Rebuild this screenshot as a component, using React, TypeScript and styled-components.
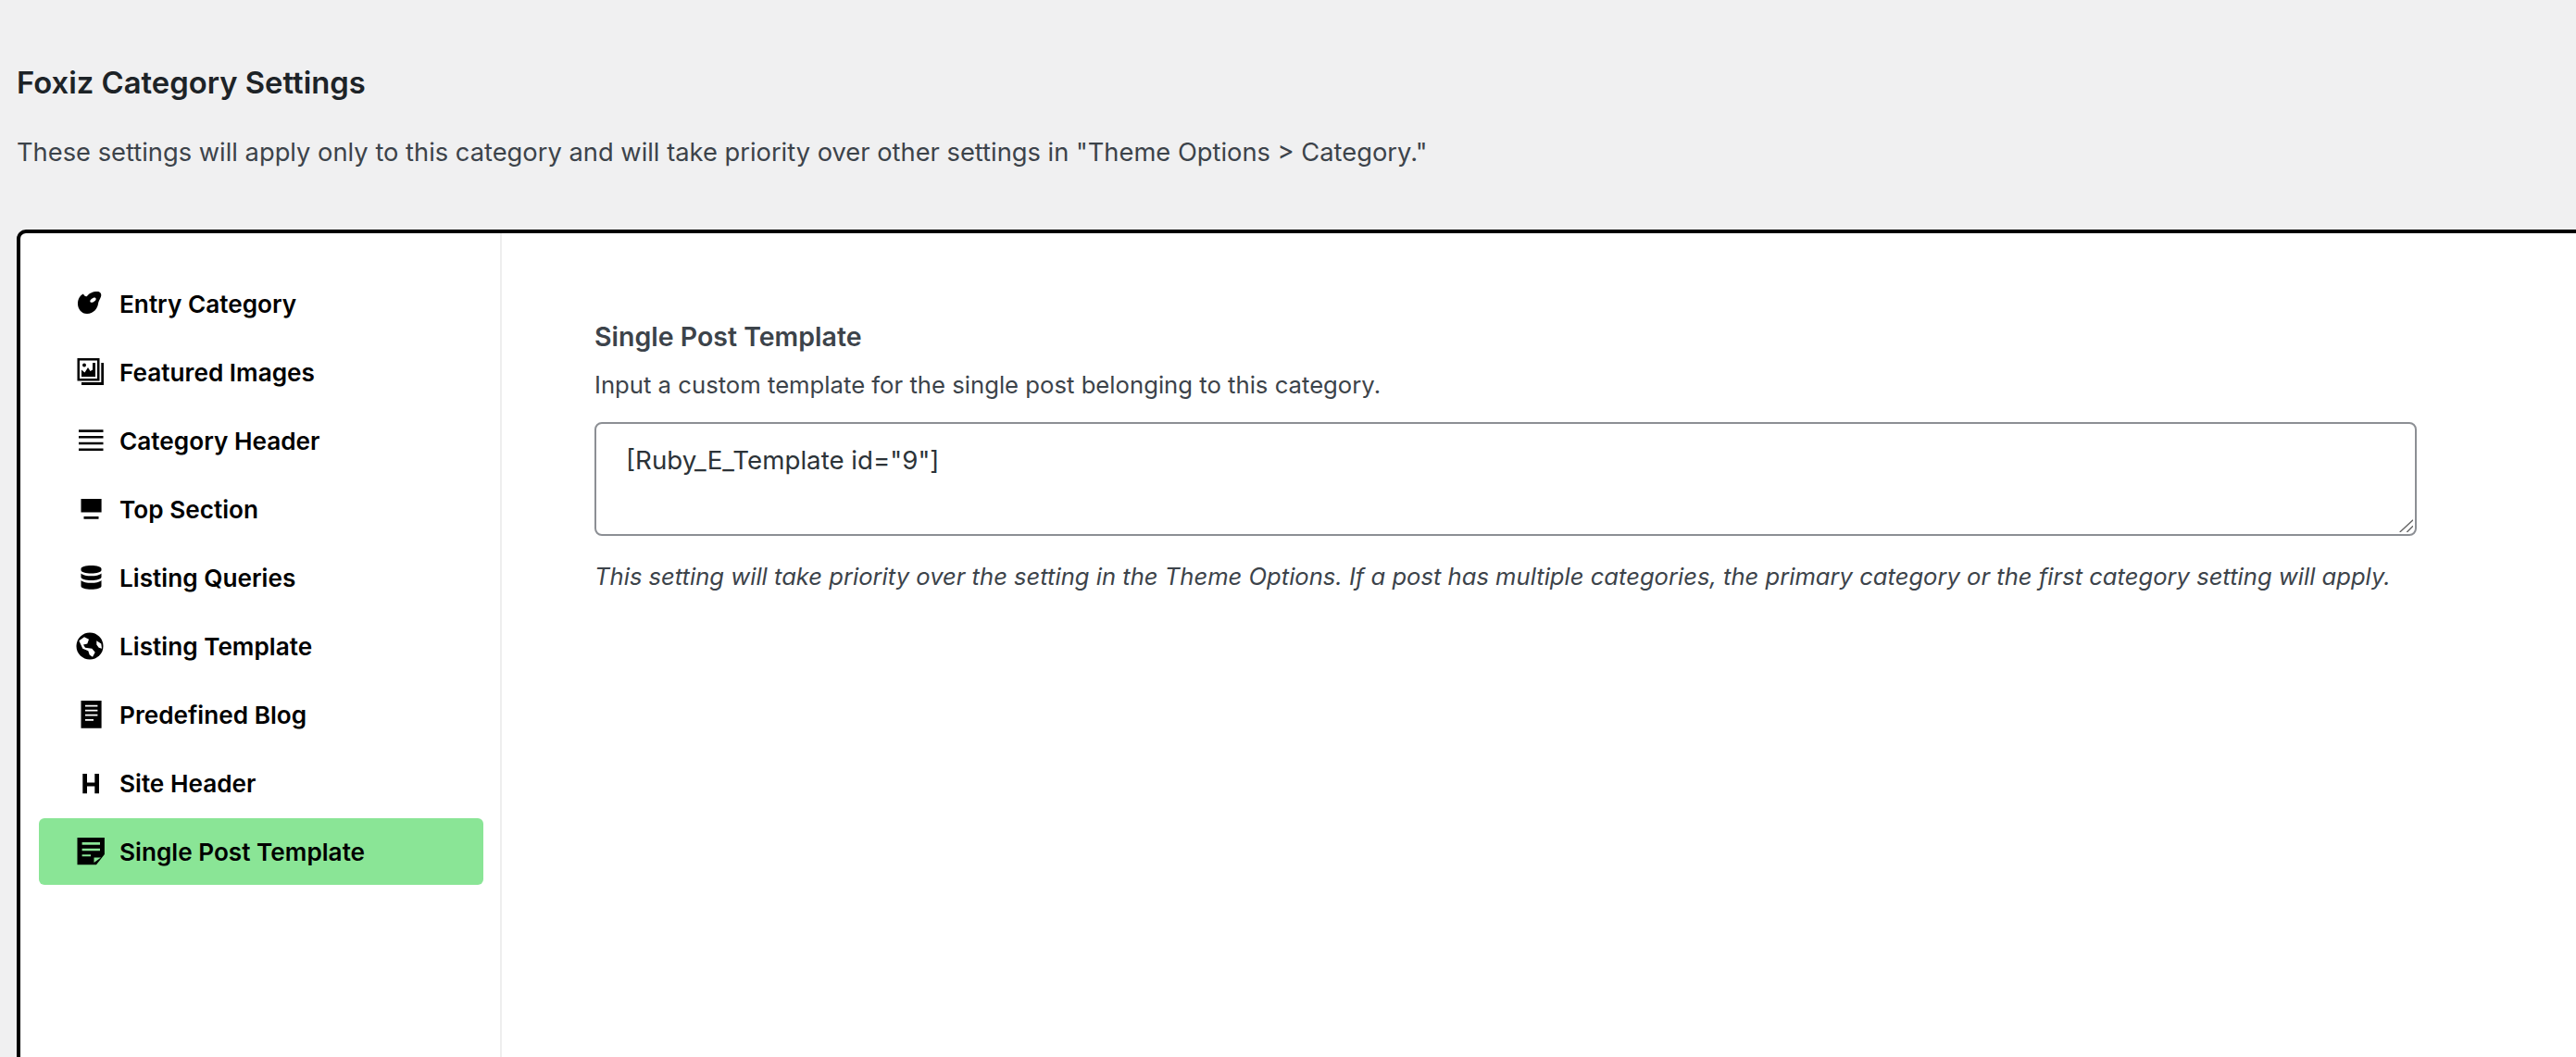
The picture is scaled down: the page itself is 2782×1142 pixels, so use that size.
import * as React from 'react';
import styled, { createGlobalStyle } from 'styled-components';

const GlobalStyle = createGlobalStyle`
  html, body {
    margin: 0;
    padding: 0;
    height: 100%;
    overflow: hidden;
    background: #f0f0f1;
  }
  body {
    font-family: Inter, "Liberation Sans", sans-serif;
    color: #3c434a;
  }
`;

const Page = styled.div`
  height: 1142px;
  padding: 70px 0 0 18px;
  box-sizing: border-box;
  overflow: hidden;
`;

const Title = styled.h2`
  margin: 0;
  font-size: 32.8px;
  line-height: 38px;
  font-weight: 600;
  color: #1d2327;
`;

const Intro = styled.p`
  margin: 39px 0 0;
  font-size: 27.3px;
  line-height: 36px;
  color: #3c434a;
`;

const Panel = styled.div`
  display: flex;
  margin: 65px -30px 0 0;
  height: 960px;
  background: #fff;
  border: 4px solid #000;
  border-radius: 10px;
`;

const Sidebar = styled.nav`
  display: flex;
  flex-direction: column;
  gap: 2px;
  flex: 0 0 520px;
  box-sizing: border-box;
  padding: 40px 18px 0 20px;
  border-right: 2px solid #eee;
`;

const Row = styled.div<{ $active?: boolean }>`
  display: flex;
  align-items: center;
  height: 72px;
  padding-left: 38px;
  border-radius: 6px;
  background: ${props => (props.$active ? '#8ae596' : 'transparent')};
  color: #000;
  font-size: 26.2px;
  font-weight: 600;
`;

const IconBox = styled.span`
  display: block;
  flex: 0 0 32px;
  height: 32px;
  margin-right: 17px;
`;

const Content = styled.main`
  flex: 1;
  padding: 94px 0 0 100px;
`;

const FieldTitle = styled.h3`
  margin: 0;
  font-size: 28.5px;
  line-height: 36px;
  font-weight: 600;
  color: #3c434a;
`;

const FieldDesc = styled.p`
  margin: 16px 0 0;
  font-size: 25.7px;
  line-height: 36px;
`;

const AreaWrap = styled.div`
  position: relative;
  width: 1968px;
  height: 123px;
  margin-top: 22px;
`;

const Area = styled.textarea`
  display: block;
  box-sizing: border-box;
  width: 100%;
  height: 100%;
  padding: 21px 32px;
  border: 2px solid #8c8f94;
  border-radius: 8px;
  background: #fff;
  font-family: Inter, "Liberation Sans", sans-serif;
  font-size: 27.7px;
  line-height: 36px;
  color: #2c3338;
  outline: none;
  resize: none;
`;

const Grip = styled.svg`
  position: absolute;
  right: 4px;
  bottom: 4px;
  width: 16px;
  height: 16px;
  stroke: #666;
  stroke-width: 1.4;
  fill: none;
  pointer-events: none;
`;

const Note = styled.p`
  margin: 26px 0 0;
  white-space: nowrap;
  font-size: 25.6px;
  line-height: 36px;
  font-style: italic;
`;

const Svg = styled.svg`
  display: block;
  width: 32px;
  height: 32px;
  overflow: visible;
  fill: currentColor;
`;

const EntryIcon = () => (
  <Svg viewBox="0 0 32 32">
    <path
      fillRule="evenodd"
      d="M10 5.500C11 8 12.500 8.500 14 8 16 5 20 3 25 3c3.500 0 5 2.500 4 5.500-1 3-2.500 4.500-3 7.500-.5 5-5 11-12 11C8 27 4 22 4 16 4 11 6.500 7 10 5.500zM20.500 10c-2 .8-3.500 2.300-3.200 3.800.3 1.200 2 1.200 3.700.4 2-1 3-2.500 2.600-3.700-.3-1-1.700-1.200-3.100-.5z"
    />
  </Svg>
);

const ImagesIcon = () => (
  <Svg viewBox="0 0 32 32">
    <path fillRule="evenodd" d="M3.500 1h24v24.500h-24zM6 3.500V23h19V3.500z" />
    <path d="M29.300 6H32v24H8v-3h21.300z" />
    <path d="M8 21v-7.500l3.500 3L15 11l2.500 4 2.500-1.500V6h3v15z" />
    <circle cx="11" cy="8.500" r="2" />
  </Svg>
);

const LinesIcon = () => (
  <Svg viewBox="0 0 32 32">
    <path d="M5 4.300h26.500v2.600H5zM5 11h26.500v2.600H5zM5 17.700h26.500v2.600H5zM5 24.400h26.500V27H5z" />
  </Svg>
);

const TopIcon = () => (
  <Svg viewBox="0 0 32 32">
    <path d="M7.500 5h22.100v14.500H7.500zM10.500 24h16v2.700h-16z" />
  </Svg>
);

const DatabaseIcon = () => (
  <Svg viewBox="0 0 32 32">
    <path d="M7.500 6.500C7.500 4.500 12.500 3 18.500 3s11 1.500 11 3.500V8c0 2-5 3.500-11 3.500S7.500 10 7.500 8zM7.500 11.500c2 2 6.500 2.800 11 2.800s9-.8 11-2.800v4c0 2-5 3.500-11 3.500s-11-1.500-11-3.500zM7.500 19c2 2 6.500 2.800 11 2.800s9-.8 11-2.800v6.200c0 2-5 3.500-11 3.500s-11-1.500-11-3.500z" />
  </Svg>
);

const GlobeIcon = () => (
  <Svg viewBox="0 0 32 32">
    <circle cx="17" cy="16" r="14.500" />
    <path
      fill="#fff"
      d="M5.300 10.200 11 6.200l5 2.600-1.700 4.700-4.300 1 2 3.300 7.300 1 3.400 4-2.700 5-3.300-2.300-1.400-4.300-6-2.400zM24.300 10.200l5 3.300.7 5.300-3.300-1-2.400-3.300z"
    />
  </Svg>
);

const DocIcon = () => (
  <Svg viewBox="0 0 32 32">
    <path
      fillRule="evenodd"
      d="M7.500 1h22.100v29.700H7.500zM12 5.700v1.700h13.400V5.700zM12 10.700v1.700h13.400v-1.700zM12 15.700v1.700h13.400v-1.700zM12 21v1.700h9V21z"
    />
  </Svg>
);

const HIcon = () => (
  <Svg viewBox="0 0 32 32">
    <path d="M9.300 6h4.700v9.500h8.300V6H27v21.300h-4.700V19.500H14v7.800H9.300z" />
  </Svg>
);

const NoteIcon = () => (
  <Svg viewBox="0 0 32 32">
    <path
      fillRule="evenodd"
      d="M3.500 1h29.400v18L24 30.300H3.500zM8.600 6v2.700H28V6zM8.600 12.700v2.600H28v-2.600zM8.600 19.300v2H18v-2zM21.500 22.500V28l7.500-5.500z"
    />
  </Svg>
);

const items = [
  { label: 'Entry Category', icon: <EntryIcon /> },
  { label: 'Featured Images', icon: <ImagesIcon /> },
  { label: 'Category Header', icon: <LinesIcon /> },
  { label: 'Top Section', icon: <TopIcon /> },
  { label: 'Listing Queries', icon: <DatabaseIcon /> },
  { label: 'Listing Template', icon: <GlobeIcon /> },
  { label: 'Predefined Blog', icon: <DocIcon /> },
  { label: 'Site Header', icon: <HIcon /> },
  { label: 'Single Post Template', icon: <NoteIcon />, active: true },
];

export default function App() {
  return (
    <Page>
      <GlobalStyle />
      <Title>Foxiz Category Settings</Title>
      <Intro>
        These settings will apply only to this category and will take priority over other settings in "Theme Options &gt; Category."
      </Intro>
      <Panel>
        <Sidebar>
          {items.map(item => (
            <Row key={item.label} $active={item.active}>
              <IconBox>{item.icon}</IconBox>
              {item.label}
            </Row>
          ))}
        </Sidebar>
        <Content>
          <FieldTitle>Single Post Template</FieldTitle>
          <FieldDesc>Input a custom template for the single post belonging to this category.</FieldDesc>
          <AreaWrap>
            <Area readOnly value={'[Ruby_E_Template id="9"]'} />
            <Grip viewBox="0 0 16 16">
              <path d="M1.700 16 16 2.700M9.300 16 16 9.300" />
            </Grip>
          </AreaWrap>
          <Note>
            This setting will take priority over the setting in the Theme Options. If a post has multiple categories, the primary category or the first category setting will apply.
          </Note>
        </Content>
      </Panel>
    </Page>
  );
}
